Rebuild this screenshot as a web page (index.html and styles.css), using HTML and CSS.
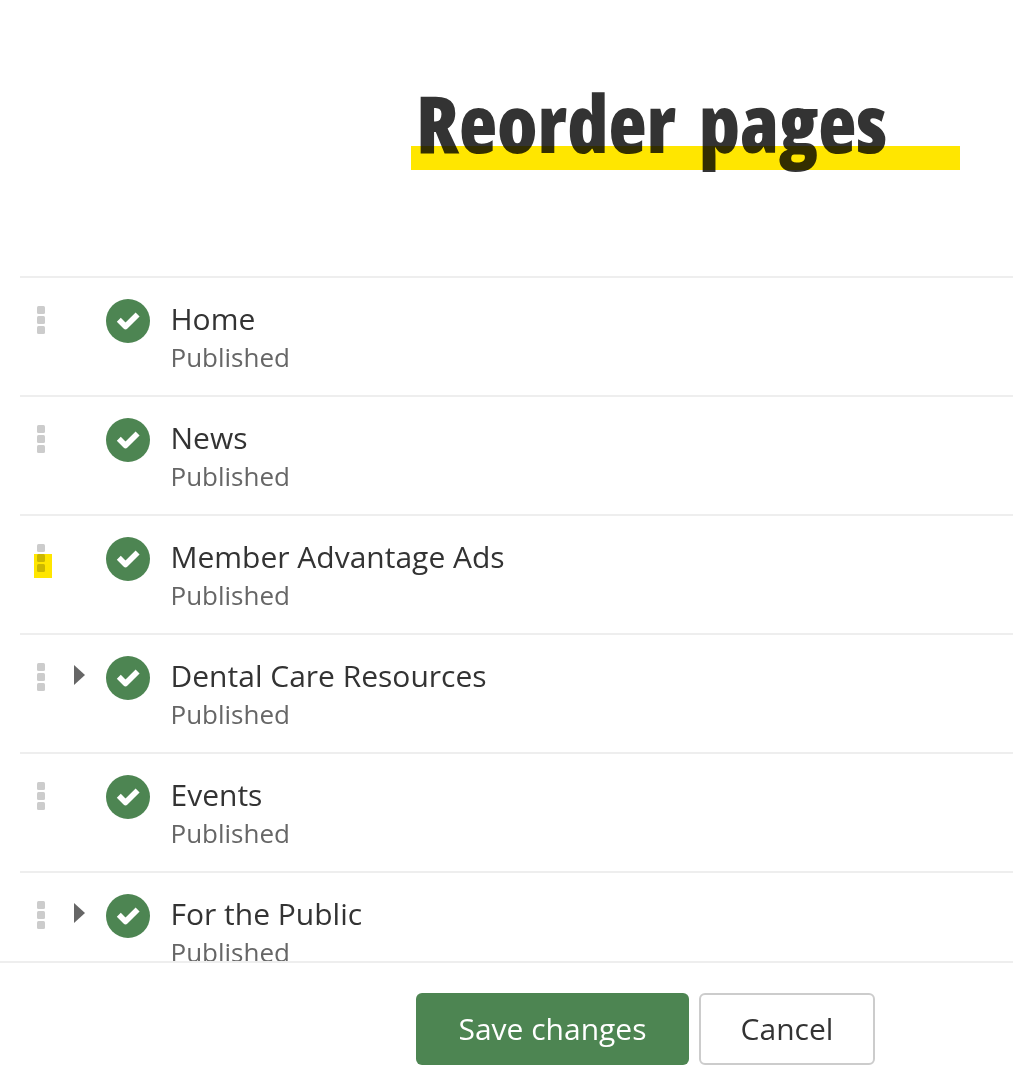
FILE: index.html
```html
<!DOCTYPE html>
<html lang="en">
<head>
<meta charset="utf-8">
<title>Reorder pages</title>
<link rel="stylesheet" href="styles.css">
</head>
<body>
<svg class="defs" width="0" height="0" aria-hidden="true">
  <symbol id="check" viewBox="0 0 44 44">
    <circle cx="22" cy="22" r="22" fill="#4d8552"/>
    <path d="M12.8 20.8L19.5 27.5L31.6 15.4" fill="none" stroke="#fff" stroke-width="5.6" stroke-linejoin="round"/>
  </symbol>
</svg>
<main class="page">
  <header class="head">
    <h1 class="title"><span class="title-text">Reorder pages</span><span class="title-mark"></span></h1>
  </header>
  <ul class="list">
    <li class="row">
      <span class="grip"><i></i><i></i><i></i></span><span class="caret-slot"></span>
      <svg class="status"><use href="#check"/></svg>
      <div class="text"><div class="name">Home</div><div class="state">Published</div></div>
    </li>
    <li class="row">
      <span class="grip"><i></i><i></i><i></i></span><span class="caret-slot"></span>
      <svg class="status"><use href="#check"/></svg>
      <div class="text"><div class="name">News</div><div class="state">Published</div></div>
    </li>
    <li class="row">
      <span class="grip"><i></i><i></i><i></i><b class="grip-mark"></b></span><span class="caret-slot"></span>
      <svg class="status"><use href="#check"/></svg>
      <div class="text"><div class="name">Member Advantage Ads</div><div class="state">Published</div></div>
    </li>
    <li class="row">
      <span class="grip"><i></i><i></i><i></i></span><span class="caret-slot"><span class="caret"></span></span>
      <svg class="status"><use href="#check"/></svg>
      <div class="text"><div class="name">Dental Care Resources</div><div class="state">Published</div></div>
    </li>
    <li class="row">
      <span class="grip"><i></i><i></i><i></i></span><span class="caret-slot"></span>
      <svg class="status"><use href="#check"/></svg>
      <div class="text"><div class="name">Events</div><div class="state">Published</div></div>
    </li>
    <li class="row">
      <span class="grip"><i></i><i></i><i></i></span><span class="caret-slot"><span class="caret"></span></span>
      <svg class="status"><use href="#check"/></svg>
      <div class="text"><div class="name">For the Public</div><div class="state">Published</div></div>
    </li>
  </ul>
  <footer class="foot">
    <button class="btn btn-save" type="button">Save changes</button>
    <button class="btn btn-cancel" type="button">Cancel</button>
  </footer>
</main>
</body>
</html>
```
FILE: styles.css
```css
* { box-sizing: border-box; }
html, body { margin: 0; padding: 0; background: #fff; }
body { font-family: "Open Sans", "Liberation Sans", sans-serif; color: #333; overflow: hidden; }
.defs { position: absolute; }
.page { width: 1013px; height: 1072px; display: flex; flex-direction: column; overflow: hidden; }
.head { height: 276px; flex: none; padding-left: 411px; padding-top: 74px; }
.title { position: relative; margin: 0; width: 549px; height: 96px; font-size: 80px; line-height: 96px; font-weight: 760; font-stretch: 75%; word-spacing: 9px; color: #333; white-space: nowrap; }
.title-text { display: inline-block; margin-left: 5px; transform: scaleX(0.985); transform-origin: left center; }
.title-mark { position: absolute; left: 0; right: 0; top: 72px; height: 24px; background: #ffe600; mix-blend-mode: multiply; }
.list { flex: 1; min-height: 0; overflow: hidden; list-style: none; margin: 0 0 0 20px; padding: 0; }
.row { height: 119px; border-top: 2px solid #eee; display: flex; align-items: flex-start; padding-top: 21px; }
.grip { position: relative; width: 54px; padding: 7px 0 0 17px; display: flex; flex-direction: column; gap: 2px; flex: none; }
.grip i { display: block; width: 8px; height: 8px; border-radius: 1.5px; background: #ccc; }
.grip-mark { position: absolute; left: 14px; top: 17px; width: 18px; height: 24px; background: #ffe600; mix-blend-mode: multiply; }
.caret-slot { width: 32px; flex: none; padding-top: 9px; display: block; }
.caret { display: block; width: 0; height: 0; border-style: solid; border-width: 10px 0 10px 11px; border-color: transparent transparent transparent #666; }
.status { width: 44px; height: 44px; flex: none; display: block; }
.text { margin-left: 20.5px; padding-top: 1px; }
.name { font-size: 30px; line-height: 38px; color: #333; }
.state { font-size: 26px; line-height: 38px; color: #666; }
.foot { flex: none; height: 111px; border-top: 2px solid #eee; display: flex; gap: 10px; padding: 30px 0 0 416px; }
.btn { height: 72px; border-radius: 6px; font-family: inherit; font-size: 30px; padding: 0 0 2px; }
.btn-save { width: 273px; background: #4d8552; color: #fff; border: 0; }
.btn-cancel { width: 176px; background: #fff; color: #333; border: 2px solid #ccc; }
```
